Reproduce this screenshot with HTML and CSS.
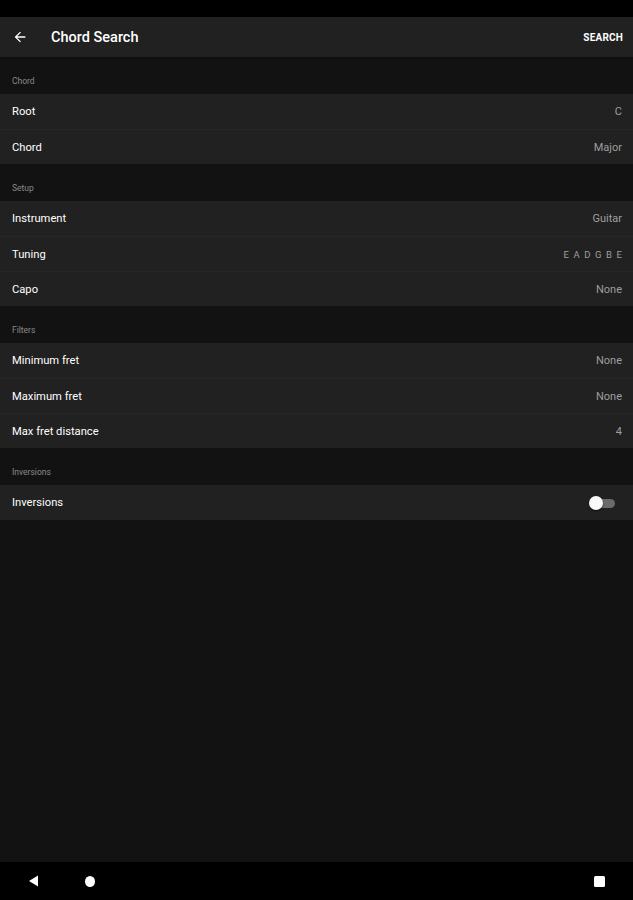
FILE: index.html
```html
<!DOCTYPE html>
<html>
<head>
<meta charset="utf-8">
<link rel="stylesheet" href="styles.css">
</head>
<body>
<div class="screen">
  <div class="statusbar"></div>
  <header class="appbar">
    <svg class="back" width="16" height="16" viewBox="0 0 24 24"><path d="M20 11H7.83l5.59-5.59L12 4l-8 8 8 8 1.41-1.41L7.83 13H20v-2z" fill="#fff"/></svg>
    <div class="title">Chord Search</div>
    <div class="action">SEARCH</div>
  </header>
  <main class="content">
    <div class="section-header">Chord</div>
    <div class="group">
      <div class="row"><span class="label">Root</span><span class="value">C</span></div>
      <div class="row"><span class="label">Chord</span><span class="value">Major</span></div>
    </div>
    <div class="section-header">Setup</div>
    <div class="group">
      <div class="row"><span class="label">Instrument</span><span class="value">Guitar</span></div>
      <div class="row"><span class="label">Tuning</span><span class="value spaced">E A D G B E</span></div>
      <div class="row"><span class="label">Capo</span><span class="value">None</span></div>
    </div>
    <div class="section-header">Filters</div>
    <div class="group">
      <div class="row"><span class="label">Minimum fret</span><span class="value">None</span></div>
      <div class="row"><span class="label">Maximum fret</span><span class="value">None</span></div>
      <div class="row"><span class="label">Max fret distance</span><span class="value">4</span></div>
    </div>
    <div class="section-header">Inversions</div>
    <div class="group">
      <div class="row"><span class="label">Inversions</span><span class="switch"><span class="track"></span><span class="thumb"></span></span></div>
    </div>
  </main>
  <nav class="navbar">
    <svg class="nav-back" width="11" height="12" viewBox="0 0 11 12"><path d="M10 0.5 L10 11.5 L1 6 Z" fill="#fff"/></svg>
    <span class="nav-home"></span>
    <span class="spacer"></span>
    <span class="nav-recent"></span>
  </nav>
</div>
</body>
</html>
```
FILE: styles.css
```css
* { box-sizing: border-box; }
html, body { margin: 0; padding: 0; background: #121212; }
body { font-family: Roboto, "Noto Sans", sans-serif; }
.screen { width: 633px; height: 900px; display: flex; flex-direction: column; background: #121212; }
.statusbar { height: 17px; background: #000; flex: none; }
.appbar { height: 40px; background: #212121; display: flex; align-items: center; padding: 0 10px 0 12px; flex: none; box-shadow: 0 1px 2px rgba(0,0,0,0.4); }
.back { flex: none; }
.title { color: #fff; font-size: 14.5px; font-weight: 500; margin-left: 23px; flex: 1; }
.action { color: #fff; font-size: 10px; font-weight: 700; letter-spacing: 0.2px; }
.content { flex: 1; display: flex; flex-direction: column; }
.section-header { height: 37px; display: flex; align-items: flex-end; padding: 0 0 8px 12px; color: #8a8a8a; font-size: 8.5px; }
.group { background: #212121; }
.row { height: 35px; display: flex; align-items: center; justify-content: space-between; padding: 0 11px 0 12px; border-top: 1px solid #262626; }
.row:first-child { border-top: none; }
.label { color: #fff; font-size: 11.2px; }
.value { color: #9e9e9e; font-size: 11px; }
.spaced { font-size: 9.5px; letter-spacing: 1.1px; margin-right: -1.1px; }
.switch { position: relative; width: 28px; height: 16px; display: inline-block; margin-right: 5px; }
.track { position: absolute; left: 4px; top: 4px; width: 22px; height: 9px; border-radius: 5px; background: #6b6b6b; }
.thumb { position: absolute; left: 0; top: 1px; width: 14px; height: 14px; border-radius: 50%; background: #fafafa; box-shadow: 0 1px 2px rgba(0,0,0,0.6); }
.navbar { height: 38px; background: #000; display: flex; align-items: center; padding: 0 28px 0 28px; flex: none; }
.nav-back { flex: none; }
.nav-home { width: 10px; height: 11px; border-radius: 50%; background: #fff; margin-left: 46px; }
.spacer { flex: 1; }
.nav-recent { width: 11px; height: 11px; background: #fff; border-radius: 1.5px; }
```
